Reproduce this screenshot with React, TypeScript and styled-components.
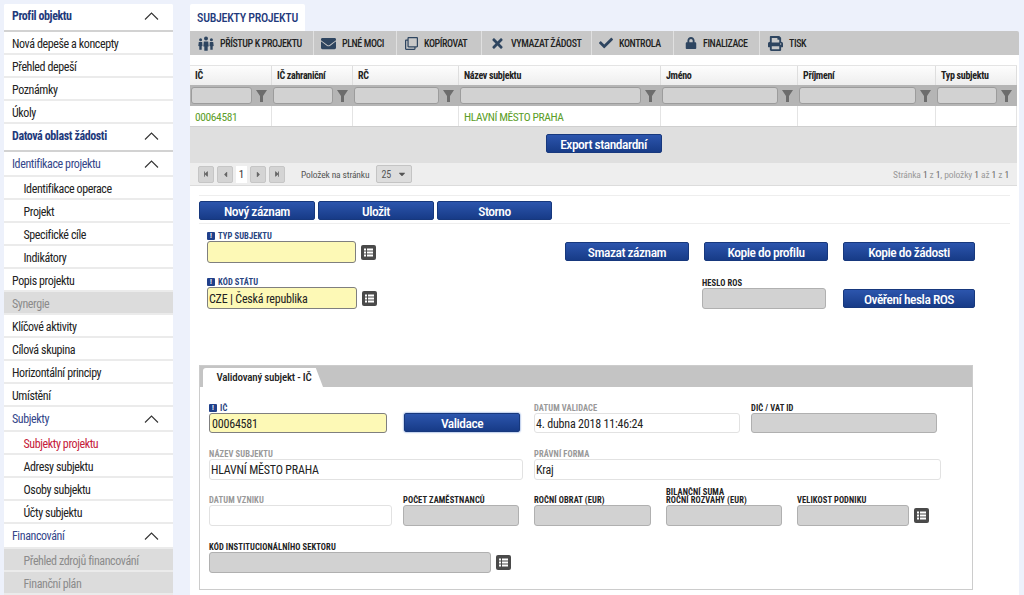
import React from 'react';
import styled, { createGlobalStyle } from 'styled-components';
import {
  FaCheck,
  FaEnvelope,
  FaLock,
  FaPrint,
  FaRegClone,
  FaTimes,
  FaCaretDown,
  FaStepBackward,
  FaStepForward,
  FaCaretLeft,
  FaCaretRight,
} from 'react-icons/fa';

const GlobalStyle = createGlobalStyle`
  html, body {
    margin: 0;
    padding: 0;
    background: #edf1fb;
    overflow: hidden;
  }
  body {
    font-family: Roboto, "Liberation Sans", sans-serif;
    font-stretch: 75%;
    font-size: 12px;
    color: #222;
  }
  * { box-sizing: border-box; }
`;

type NavItem = {
  label: string;
  kind: 'head' | 'group' | 'item' | 'sub' | 'active' | 'off' | 'suboff';
  chevron?: boolean;
};

const nav: NavItem[] = [
  { label: 'Profil objektu', kind: 'head', chevron: true },
  { label: 'Nová depeše a koncepty', kind: 'item' },
  { label: 'Přehled depeší', kind: 'item' },
  { label: 'Poznámky', kind: 'item' },
  { label: 'Úkoly', kind: 'item' },
  { label: 'Datová oblast žádosti', kind: 'head', chevron: true },
  { label: 'Identifikace projektu', kind: 'group', chevron: true },
  { label: 'Identifikace operace', kind: 'sub' },
  { label: 'Projekt', kind: 'sub' },
  { label: 'Specifické cíle', kind: 'sub' },
  { label: 'Indikátory', kind: 'sub' },
  { label: 'Popis projektu', kind: 'item' },
  { label: 'Synergie', kind: 'off' },
  { label: 'Klíčové aktivity', kind: 'item' },
  { label: 'Cílová skupina', kind: 'item' },
  { label: 'Horizontální principy', kind: 'item' },
  { label: 'Umístění', kind: 'item' },
  { label: 'Subjekty', kind: 'group', chevron: true },
  { label: 'Subjekty projektu', kind: 'active' },
  { label: 'Adresy subjektu', kind: 'sub' },
  { label: 'Osoby subjektu', kind: 'sub' },
  { label: 'Účty subjektu', kind: 'sub' },
  { label: 'Financování', kind: 'group', chevron: true },
  { label: 'Přehled zdrojů financování', kind: 'suboff' },
  { label: 'Finanční plán', kind: 'suboff' },
];

const columns = [
  { label: 'IČ', width: 82, input: 61 },
  { label: 'IČ zahraniční', width: 81, input: 60 },
  { label: 'RČ', width: 106, input: 85 },
  { label: 'Název subjektu', width: 202, input: 181 },
  { label: 'Jméno', width: 137, input: 116 },
  { label: 'Příjmení', width: 138, input: 117 },
  { label: 'Typ subjektu', width: 81, input: 60 },
];

const PeopleIcon = () => (
  <svg width="16" height="15" viewBox="0 0 16 15" fill="currentColor">
    <circle cx="8" cy="2.6" r="2" />
    <path d="M5.8 5.4h4.4l.5 5h-1v4.4H6.3v-4.4h-1z" />
    <circle cx="2.6" cy="3.8" r="1.5" />
    <path d="M.8 6h3.4l.3 4-.8.3v3.4H1.3v-3.4L.3 10z" />
    <circle cx="13.4" cy="3.8" r="1.5" />
    <path d="M11.8 6h3.4l.5 4-1 .3v3.4h-2.4v-3.4l-.8-.3z" />
  </svg>
);

const ListIcon = () => (
  <svg width="9" height="9" viewBox="0 0 9 9" fill="#fff">
    <rect x="0" y="0.5" width="2" height="2" />
    <rect x="3" y="0.5" width="6" height="2" />
    <rect x="0" y="3.5" width="2" height="2" />
    <rect x="3" y="3.5" width="6" height="2" />
    <rect x="0" y="6.5" width="2" height="2" />
    <rect x="3" y="6.5" width="6" height="2" />
  </svg>
);

const Chevron = () => (
  <svg width="15" height="8" viewBox="0 0 15 8" fill="none" stroke="#333" strokeWidth="1.1">
    <path d="M1 7.5 7.5 1 14 7.5" />
  </svg>
);

const Funnel = () => (
  <svg width="11" height="12" viewBox="0 0 11 12" fill="#6d6d6d">
    <path d="M0 0h11L7 6v6H4V6z" />
  </svg>
);

const App = () => {
  return (
    <Page>
      <GlobalStyle />
      <Sidebar>
        {nav.map((item) => (
          <NavRow key={item.label} $kind={item.kind}>
            <span>{item.label}</span>
            {item.chevron && <Chevron />}
          </NavRow>
        ))}
      </Sidebar>

      <Main>
        <TabBar>
          <MainTab>SUBJEKTY PROJEKTU</MainTab>
        </TabBar>
        <Toolbar>
          <ToolButton $width={124} $pad={8}>
            <PeopleIcon />
            <ToolLabel>PŘÍSTUP K PROJEKTU</ToolLabel>
          </ToolButton>
          <ToolButton $width={83} $pad={7}>
            <FaEnvelope size={15} />
            <ToolLabel>PLNÉ MOCI</ToolLabel>
          </ToolButton>
          <ToolButton $width={85} $pad={8}>
            <FaRegClone size={13} />
            <ToolLabel>KOPÍROVAT</ToolLabel>
          </ToolButton>
          <ToolButton $width={110} $pad={8}>
            <FaTimes size={15} />
            <ToolLabel>VYMAZAT ŽÁDOST</ToolLabel>
          </ToolButton>
          <ToolButton $width={82} $pad={7}>
            <FaCheck size={14} />
            <ToolLabel>KONTROLA</ToolLabel>
          </ToolButton>
          <ToolButton $width={86} $pad={11}>
            <FaLock size={12} />
            <ToolLabel>FINALIZACE</ToolLabel>
          </ToolButton>
          <ToolButton $width={60} $pad={8} $last>
            <FaPrint size={15} />
            <ToolLabel>TISK</ToolLabel>
          </ToolButton>
        </Toolbar>

        <Content>
          <Grid>
            <HeadRow>
              {columns.map((col) => (
                <HeadCell key={col.label} $width={col.width}>
                  {col.label}
                </HeadCell>
              ))}
            </HeadRow>
            <FilterRow>
              {columns.map((col) => (
                <FilterCell key={col.label} $width={col.width}>
                  <FilterInput $width={col.input} />
                  <Funnel />
                </FilterCell>
              ))}
            </FilterRow>
            <DataRow>
              {columns.map((col, i) => (
                <DataCell key={col.label} $width={col.width}>
                  {i === 0 ? '00064581' : i === 3 ? 'HLAVNÍ MĚSTO PRAHA' : ''}
                </DataCell>
              ))}
            </DataRow>
            <ExportBand>
              <BlueButton $width={116} $height={19}>
                Export standardní
              </BlueButton>
            </ExportBand>
            <Pager>
              <PagerButton>
                <FaStepBackward size={6} />
              </PagerButton>
              <PagerButton>
                <FaCaretLeft size={9} />
              </PagerButton>
              <PageNumber>1</PageNumber>
              <PagerButton>
                <FaCaretRight size={9} />
              </PagerButton>
              <PagerButton>
                <FaStepForward size={6} />
              </PagerButton>
              <PagerText>Položek na stránku</PagerText>
              <PageSize>
                25
                <FaCaretDown size={10} />
              </PageSize>
              <PagerSummary>
                Stránka <b>1</b> z <b>1</b>, položky <b>1</b> až <b>1</b> z <b>1</b>
              </PagerSummary>
            </Pager>
          </Grid>

          <ActionBar>
            <BlueButton $width={116} $height={19}>Nový záznam</BlueButton>
            <BlueButton $width={116} $height={19}>Uložit</BlueButton>
            <BlueButton $width={115} $height={19}>Storno</BlueButton>
          </ActionBar>

          <TopForm>
            <TopRow>
              <Field $width={149} $left={0}>
                <Label $tone="blue">
                  <Required>!</Required>TYP SUBJEKTU
                </Label>
                <Input $tone="required" $height={22} />
              </Field>
              <ListButton />
              <TopButtons>
                <BlueButton $width={124} $height={19}>Smazat záznam</BlueButton>
                <BlueButton $width={124} $height={19}>Kopie do profilu</BlueButton>
                <BlueButton $width={132} $height={19}>Kopie do žádosti</BlueButton>
              </TopButtons>
            </TopRow>
            <TopRow>
              <Field $width={150} $left={0}>
                <Label $tone="blue">
                  <Required>!</Required>KÓD STÁTU
                </Label>
                <Input $tone="required" $height={22}>CZE | Česká republika</Input>
              </Field>
              <ListButton />
              <Field $width={124} $left={325}>
                <Label $tone="dark">HESLO ROS</Label>
                <Input $tone="disabled" $height={21} />
              </Field>
              <BlueButton $width={132} $height={19} $left={17} $top={19}>
                Ověření hesla ROS
              </BlueButton>
            </TopRow>
          </TopForm>

          <Panel>
            <PanelStrip>
              <PanelTab>Validovaný subjekt - IČ</PanelTab>
            </PanelStrip>
            <PanelBody>
              <FormRow>
                <Field $width={178} $left={0}>
                  <Label $tone="blue">
                    <Required>!</Required>IČ
                  </Label>
                  <Input $tone="required" $height={20} $pad={2}>00064581</Input>
                </Field>
                <BlueButton $width={116} $height={19} $left={17} $top={19} $focused>
                  Validace
                </BlueButton>
                <Field $width={206} $left={14}>
                  <Label $tone="muted">DATUM VALIDACE</Label>
                  <Input $tone="readonly" $height={20}>4. dubna 2018 11:46:24</Input>
                </Field>
                <Field $width={186} $left={11}>
                  <Label $tone="dark">DIČ / VAT ID</Label>
                  <Input $tone="disabled" $height={20} />
                </Field>
              </FormRow>
              <FormRow>
                <Field $width={314} $left={0}>
                  <Label $tone="muted">NÁZEV SUBJEKTU</Label>
                  <Input $tone="readonly" $height={21}>HLAVNÍ MĚSTO PRAHA</Input>
                </Field>
                <Field $width={407} $left={11}>
                  <Label $tone="muted">PRÁVNÍ FORMA</Label>
                  <Input $tone="readonly" $height={21}>Kraj</Input>
                </Field>
              </FormRow>
              <FormRow>
                <Field $width={183} $left={0}>
                  <Label $tone="muted">DATUM VZNIKU</Label>
                  <Input $tone="readonly" $height={21} />
                </Field>
                <Field $width={116} $left={11}>
                  <Label $tone="dark">POČET ZAMĚSTNANCŮ</Label>
                  <Input $tone="disabled" $height={21} />
                </Field>
                <Field $width={117} $left={15}>
                  <Label $tone="dark">ROČNÍ OBRAT (EUR)</Label>
                  <Input $tone="disabled" $height={21} />
                </Field>
                <Field $width={116} $left={15}>
                  <Label $tone="dark">
                    BILANČNÍ SUMA
                    <br />
                    ROČNÍ ROZVAHY (EUR)
                  </Label>
                  <Input $tone="disabled" $height={21} />
                </Field>
                <Field $width={112} $left={15}>
                  <Label $tone="dark">VELIKOST PODNIKU</Label>
                  <Input $tone="disabled" $height={21} />
                </Field>
                <ListButton />
              </FormRow>
              <FormRow>
                <Field $width={282} $left={0}>
                  <Label $tone="dark">KÓD INSTITUCIONÁLNÍHO SEKTORU</Label>
                  <Input $tone="disabled" $height={21} />
                </Field>
                <ListButton />
              </FormRow>
            </PanelBody>
          </Panel>
        </Content>
      </Main>
    </Page>
  );
};

const ListButton = () => (
  <ListBox>
    <ListIcon />
  </ListBox>
);

const navColor = (kind: NavItem['kind']) => {
  switch (kind) {
    case 'head':
      return '#1f3a7c';
    case 'group':
      return '#34468a';
    case 'active':
      return '#c5203a';
    case 'off':
    case 'suboff':
      return '#8b8b8b';
    default:
      return '#222';
  }
};

const navPadding = (kind: NavItem['kind']) => {
  if (kind === 'head') return '0 14px 3px 8px';
  if (kind === 'group') return '1px 14px 0 8px';
  if (kind === 'sub' || kind === 'active' || kind === 'suboff') return '2px 14px 0 19.5px';
  return '2px 14px 0 8px';
};

const Page = styled.div`
  display: flex;
  width: 1024px;
  height: 595px;
  padding: 4px 5px 0 4px;
  overflow: hidden;
  background: #edf1fb;
`;

const Sidebar = styled.nav`
  flex: 0 0 169px;
  height: 591px;
  overflow: hidden;
  background: #fff;
  border-radius: 2px 2px 0 0;
`;

const NavRow = styled.div<{ $kind: NavItem['kind'] }>`
  display: flex;
  align-items: center;
  justify-content: space-between;
  height: ${(p) => (p.$kind === 'head' ? '28px' : p.$kind === 'group' ? '25px' : '23px')};
  padding: ${(p) => navPadding(p.$kind)};
  font-size: 12px;
  letter-spacing: -0.4px;
  font-weight: ${(p) => (p.$kind === 'head' ? 700 : 400)};
  white-space: nowrap;
  color: ${(p) => navColor(p.$kind)};
  background: ${(p) => (p.$kind === 'off' || p.$kind === 'suboff' ? '#dcdcdc' : '#fff')};
  border-bottom: ${(p) => (p.$kind === 'head' ? '2px solid #d2d2d2' : '2px solid #ebebeb')};
`;

const Main = styled.main`
  flex: 0 0 829px;
  margin-left: 17px;
  display: flex;
  flex-direction: column;
`;

const TabBar = styled.div`
  display: flex;
  height: 27px;
`;

const MainTab = styled.div`
  width: 115px;
  height: 27px;
  display: flex;
  align-items: center;
  justify-content: center;
  background: #fff;
  color: #1f3a7c;
  font-size: 12px;
  letter-spacing: -0.3px;
  font-weight: 500;
  white-space: nowrap;
  border-radius: 2px 2px 0 0;
`;

const Toolbar = styled.div`
  display: flex;
  height: 24px;
  background: #c8c8c8;
  border-radius: 0 2px 0 0;
`;

const ToolButton = styled.div<{ $width: number; $pad: number; $last?: boolean }>`
  flex: 0 0 ${(p) => p.$width}px;
  display: flex;
  align-items: center;
  padding-left: ${(p) => p.$pad}px;
  color: #2e4560;
  border-right: ${(p) => (p.$last ? 'none' : '1px solid #e0e0e0')};
`;

const ToolLabel = styled.span`
  margin-left: 6px;
  font-size: 10px;
  font-weight: 500;
  letter-spacing: -0.4px;
  color: #222;
  white-space: nowrap;
`;

const Content = styled.div`
  background: #fff;
  flex: 1;
  padding-top: 10px;
  min-height: 0;
`;

const Grid = styled.div`
  width: 827px;
`;

const HeadRow = styled.div`
  display: flex;
  height: 20px;
  background: linear-gradient(#fdfdfd, #eeeeee);
  border-top: 1px solid #e4e4e4;
`;

const HeadCell = styled.div<{ $width: number }>`
  flex: 0 0 ${(p) => p.$width}px;
  display: flex;
  align-items: center;
  padding-left: 5px;
  font-size: 10px;
  letter-spacing: -0.3px;
  font-weight: 700;
  color: #222;
  border-right: 1px solid #dedede;
`;

const FilterRow = styled.div`
  display: flex;
  height: 21px;
  background: #b5b5b5;
`;

const FilterCell = styled.div<{ $width: number }>`
  flex: 0 0 ${(p) => p.$width}px;
  display: flex;
  align-items: center;
  gap: 4px;
  padding-left: 1px;
`;

const FilterInput = styled.div<{ $width: number }>`
  width: ${(p) => p.$width}px;
  height: 17px;
  background: #d2d2d2;
  border: 1px solid #9c9c9c;
  border-radius: 3px;
`;

const DataRow = styled.div`
  display: flex;
  height: 20px;
`;

const DataCell = styled.div<{ $width: number }>`
  flex: 0 0 ${(p) => p.$width}px;
  display: flex;
  align-items: center;
  padding: 1px 0 0 5px;
  font-size: 11.5px;
  letter-spacing: -0.4px;
  color: #5c9e28;
  white-space: nowrap;
  border-right: 1px solid #e4e4e4;
`;

const ExportBand = styled.div`
  display: flex;
  justify-content: center;
  align-items: flex-start;
  height: 37px;
  padding-top: 7px;
  background: #dfdfdf;
  border-top: 1px solid #cfcfcf;
`;

const BlueButton = styled.div<{
  $width: number;
  $height: number;
  $left?: number;
  $top?: number;
  $focused?: boolean;
}>`
  flex: 0 0 ${(p) => p.$width}px;
  width: ${(p) => p.$width}px;
  height: ${(p) => p.$height}px;
  margin-left: ${(p) => p.$left ?? 0}px;
  margin-top: ${(p) => p.$top ?? 0}px;
  display: flex;
  align-items: center;
  justify-content: center;
  background: linear-gradient(#2c55ad, #173b87);
  border: 1px solid #17387d;
  border-radius: 2px;
  box-shadow: ${(p) => (p.$focused ? '0 0 2px #2b5fc0' : 'none')};
  color: #fff;
  font-size: 13.5px;
  letter-spacing: -0.5px;
  font-weight: 500;
  white-space: nowrap;
`;

const Pager = styled.div`
  display: flex;
  align-items: center;
  height: 23px;
  padding: 0 8px;
  background: #eeeeee;
  border-bottom: 1px solid #dcdcdc;
`;

const PagerButton = styled.div`
  width: 16px;
  height: 17px;
  margin-right: 3px;
  display: flex;
  align-items: center;
  justify-content: center;
  color: #666;
  background: #d4d4d4;
  border: 1px solid #c6c6c6;
  border-radius: 2px;
`;

const PageNumber = styled.div`
  width: 11px;
  height: 17px;
  margin-right: 3px;
  display: flex;
  align-items: center;
  justify-content: center;
  background: #fff;
  font-size: 11px;
  color: #333;
`;

const PagerText = styled.span`
  margin-left: 13px;
  font-size: 9.5px;
  letter-spacing: -0.15px;
  color: #555;
`;

const PageSize = styled.div`
  width: 36px;
  height: 18px;
  margin-left: 7px;
  padding: 0 4px;
  display: flex;
  align-items: center;
  justify-content: space-between;
  background: #dddddd;
  border: 1px solid #c4c4c4;
  border-radius: 2px;
  font-size: 10px;
  color: #555;
`;

const PagerSummary = styled.span`
  margin-left: auto;
  font-size: 9.5px;
  letter-spacing: -0.1px;
  color: #999;
  b {
    font-weight: 400;
    color: #666;
  }
`;

const ActionBar = styled.div`
  display: flex;
  gap: 3px;
  width: 811px;
  height: 29px;
  margin: 9px 0 0 9px;
  padding: 5px 0 4px;
  border-top: 1px solid #eeeeee;
  border-bottom: 1px solid #eeeeee;
`;

const TopForm = styled.div`
  margin-left: 17px;
  height: 141px;
`;

const TopRow = styled.div`
  display: flex;
  align-items: flex-start;
  height: 46px;
`;

const TopButtons = styled.div`
  display: flex;
  gap: 15px;
  margin: 18px 0 0 189px;
`;

const Field = styled.div<{ $width: number; $left: number }>`
  flex: 0 0 ${(p) => p.$width}px;
  width: ${(p) => p.$width}px;
  margin-left: ${(p) => p.$left}px;
  display: flex;
  flex-direction: column;
  justify-content: flex-end;
  height: 39px;
`;

const labelColors = { blue: '#29457f', dark: '#222', muted: '#999' };

const Label = styled.div<{ $tone: keyof typeof labelColors }>`
  display: flex;
  flex-wrap: wrap;
  align-items: center;
  margin-bottom: 1px;
  font-size: 8.5px;
  line-height: 8px;
  font-weight: 700;
  letter-spacing: 0.1px;
  white-space: nowrap;
  color: ${(p) => labelColors[p.$tone]};
`;

const Required = styled.span`
  width: 8px;
  height: 8px;
  margin-right: 3px;
  background: #20408a;
  border-radius: 1px;
  color: #fff;
  font-size: 7px;
  line-height: 8px;
  text-align: center;
`;

const inputBackgrounds = { required: '#fdf9b6', readonly: '#fff', disabled: '#d2d2d2' };
const inputBorders = { required: '#7f7f7f', readonly: '#e2e2e2', disabled: '#b0b0b0' };

const Input = styled.div<{ $tone: keyof typeof inputBackgrounds; $height: number; $pad?: number }>`
  height: ${(p) => p.$height}px;
  display: flex;
  align-items: center;
  padding: 1px 0 0 ${(p) => p.$pad ?? 1}px;
  background: ${(p) => inputBackgrounds[p.$tone]};
  border: 1px solid ${(p) => inputBorders[p.$tone]};
  border-radius: 3px;
  font-size: 12px;
  letter-spacing: -0.2px;
  color: #222;
  white-space: nowrap;
`;

const ListBox = styled.div`
  flex: 0 0 15px;
  width: 15px;
  height: 15px;
  margin: 21px 0 0 5px;
  display: flex;
  align-items: center;
  justify-content: center;
  background: #4a4a4a;
  border-radius: 2px;
`;

const Panel = styled.section`
  width: 774px;
  margin-left: 9px;
  border: 1px solid #cccccc;
`;

const PanelStrip = styled.div`
  display: flex;
  align-items: flex-end;
  height: 21px;
  padding-left: 3px;
  background: #c4c4c4;
`;

const PanelTab = styled.div`
  width: 120px;
  height: 19px;
  padding-left: 2px;
  display: flex;
  align-items: center;
  justify-content: center;
  background: #fff;
  font-size: 11px;
  letter-spacing: -0.2px;
  font-weight: 500;
  clip-path: polygon(0 0, 94% 0, 100% 100%, 0 100%);
  border-radius: 3px 0 0 0;
`;

const PanelBody = styled.div`
  padding: 7px 0 8px 9px;
  background: #fff;
`;

const FormRow = styled.div`
  display: flex;
  align-items: flex-start;
  height: 46.67px;
`;

export default App;
